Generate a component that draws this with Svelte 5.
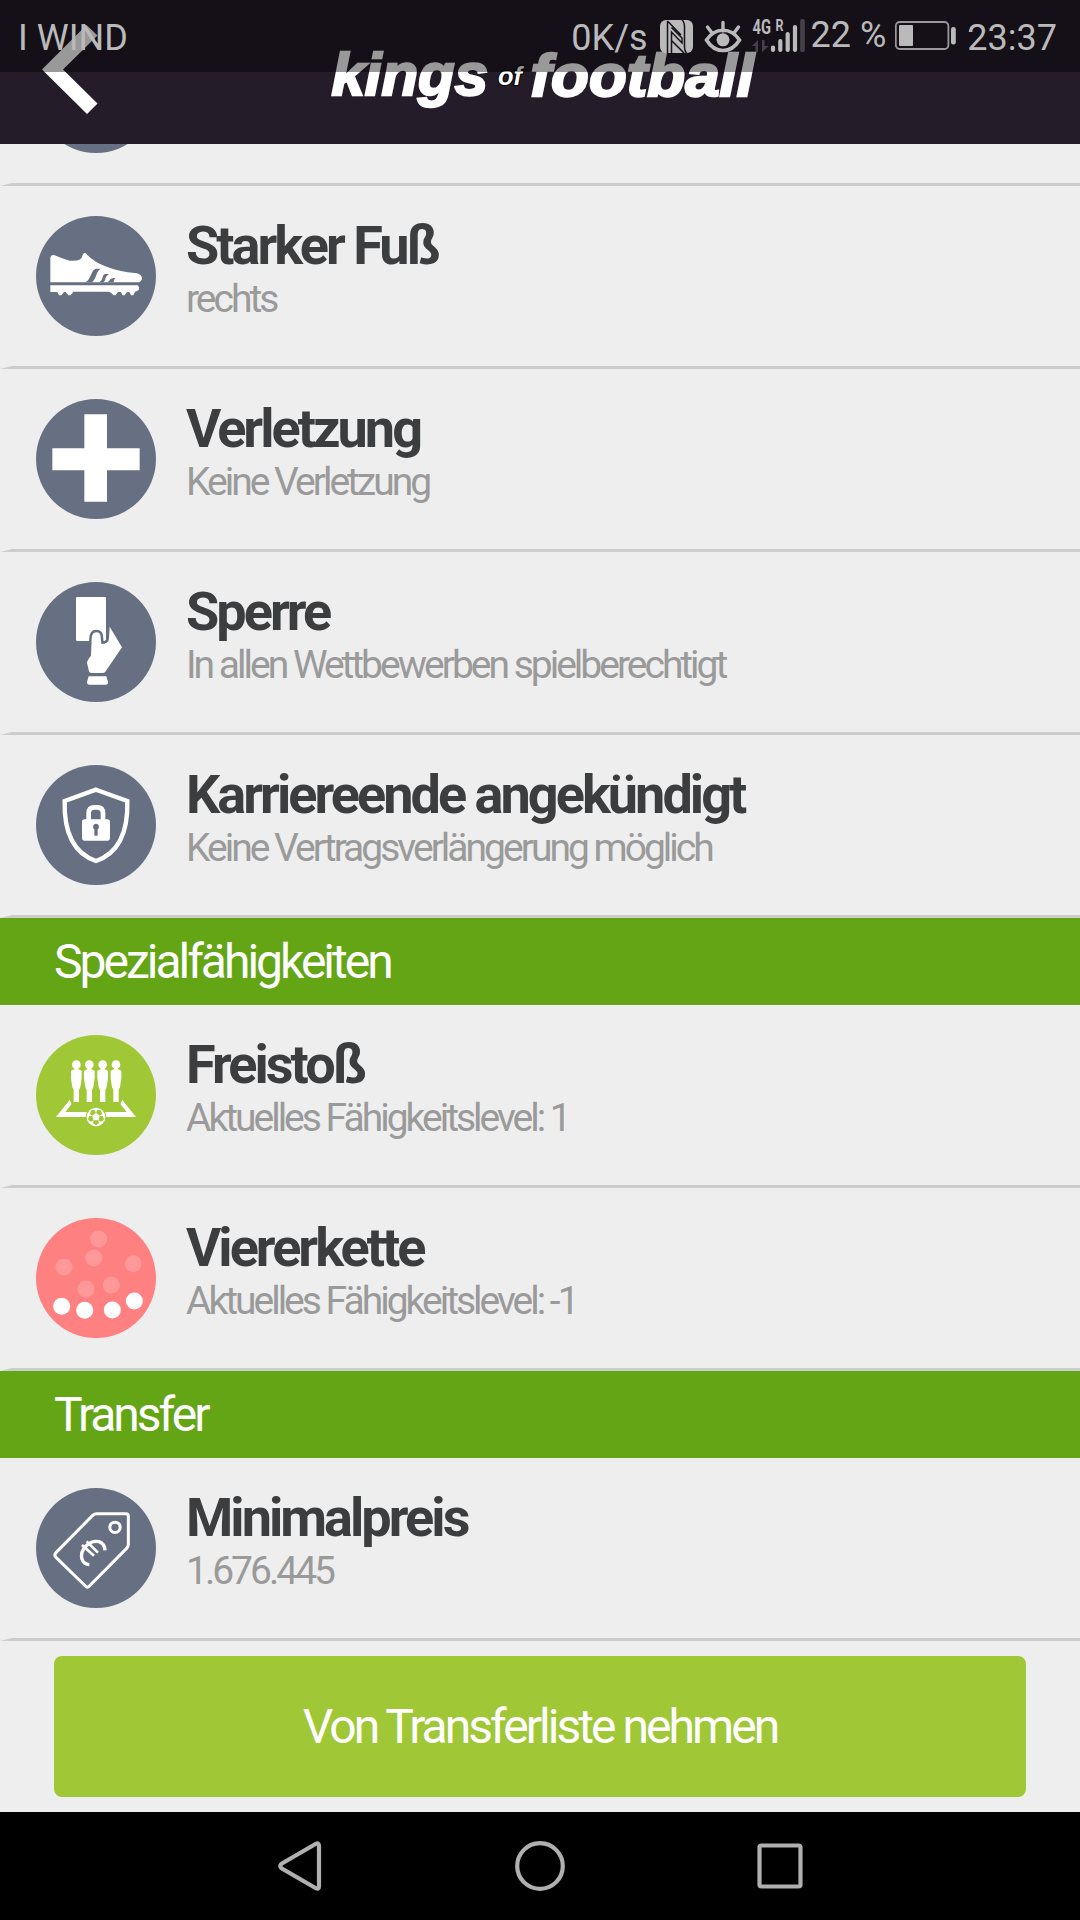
<script lang="ts">
  type Row = { icon: string; tone: string; title: string; text: string };
  type Section = { heading: string | null; rows: Row[] };

  const sections: Section[] = [
    {
      heading: null,
      rows: [
        { icon: 'shoe', tone: 'slate', title: 'Starker Fuß', text: 'rechts' },
        { icon: 'injury', tone: 'slate', title: 'Verletzung', text: 'Keine Verletzung' },
        { icon: 'card', tone: 'slate', title: 'Sperre', text: 'In allen Wettbewerben spielberechtigt' },
        { icon: 'shield', tone: 'slate', title: 'Karriereende angekündigt', text: 'Keine Vertragsverlängerung möglich' }
      ]
    },
    {
      heading: 'Spezialfähigkeiten',
      rows: [
        { icon: 'freekick', tone: 'lime', title: 'Freistoß', text: 'Aktuelles Fähigkeitslevel: 1' },
        { icon: 'backfour', tone: 'red', title: 'Viererkette', text: 'Aktuelles Fähigkeitslevel: -1' }
      ]
    },
    {
      heading: 'Transfer',
      rows: [{ icon: 'tag', tone: 'slate', title: 'Minimalpreis', text: '1.676.445' }]
    }
  ];

  const wall = [121, 160, 200, 240];
  const patches = [0, 72, 144, 216, 288];
  const others = [[188, 63], [173, 120], [84, 147], [292, 137], [150, 213], [226, 202]];
  const defenders = [[77, 265], [146, 277], [229, 276], [295, 249]];
</script>

<div class="screen">
  <header>
    <button class="back" aria-label="Zurück">
      <svg width="60" height="92" viewBox="40 24 60 92">
        <path d="M42 69.5 86.500 25 97.500 35.500 63 69.500 97.500 103.500 87 114z" fill="#fff" />
      </svg>
    </button>
    <svg class="logo" width="460" height="90" viewBox="310 30 460 90">
      <text class="word" x="331.500" y="94.500" textLength="156.500" lengthAdjust="spacingAndGlyphs">kings</text>
      <text class="of" x="498" y="85" textLength="24" lengthAdjust="spacingAndGlyphs">of</text>
      <text class="word" x="530.500" y="96" textLength="223.500" lengthAdjust="spacingAndGlyphs">football</text>
    </svg>
  </header>

  <div class="statusbar">
    <span class="carrier">I WIND</span>
    <span class="speed">0K/s</span>
    <svg class="tray" width="146" height="36" viewBox="660 18 146 36">
      <!-- nfc -->
      <rect x="660" y="20" width="33" height="33" rx="6" fill="#bababb" />
      <path d="M667.500 21 681 35M667.500 21V53M671.500 53V32L682 43V38L671.500 27.500M672 41 684 53M682 20Q684.500 22 684.500 27V47Q684.500 51 686.500 53" fill="none" stroke="#17111b" stroke-width="1.500" />
      <!-- eye -->
      <path d="M706.500 40C715 27 731 27 739.500 40C731 54 715 54 706.500 40z" fill="none" stroke="#bababb" stroke-width="3.600" />
      <circle cx="723" cy="39.800" r="6.500" fill="#bababb" />
      <path d="M723 22.500V31M707.500 27 712 33M738.500 27 734 33" stroke="#bababb" stroke-width="3.400" stroke-linecap="round" />
      <!-- signal -->
      <text class="net" x="752.500" y="33.500" textLength="18.500" lengthAdjust="spacingAndGlyphs">4G</text>
      <text class="roam" x="775.500" y="31" textLength="8" lengthAdjust="spacingAndGlyphs">R</text>
      <path d="M752 46 758 40V52H755.500V46zM762 40V52L769 46H764.500V40z" fill="#454049" />
      <path d="M773 47.500V50M780.300 41V50M787.700 34V50M795 27V50" stroke="#bababb" stroke-width="4.200" stroke-linecap="round" />
      <path d="M802.500 21V50" stroke="#454049" stroke-width="4.600" stroke-linecap="round" />
    </svg>
    <span class="percent">22 %</span>
    <svg class="battery" width="62" height="30" viewBox="896 21 62 30">
      <rect x="896.800" y="22" width="52.600" height="27" rx="4" fill="none" stroke="#9b989c" stroke-width="1.800" />
      <rect x="900" y="25" width="14" height="21" rx="1" fill="#bababb" />
      <rect x="952" y="27" width="4.800" height="17.500" rx="2.200" fill="#bababb" />
    </svg>
    <span class="clock">23:37</span>
  </div>

  <main>
    <div class="row peek">
      <span class="badge slate"></span>
    </div>
    {#each sections as section}
      {#if section.heading}
        <h2>{section.heading}</h2>
      {/if}
      {#each section.rows as row}
        <div class="row">
          <span class="badge {row.tone}">
            <svg viewBox="0 0 360 360" fill="#fff">
              {#if row.icon === 'shoe'}
                <path d="M43 199V124Q45 116 54 117Q78 128 101 134Q137 137 139 120Q141 108 149 112Q175 140 212 152Q246 166 302 172Q318 176 318 188Q315 199 304 199z" />
                <g class="cut">
                  <path d="M148 199Q158 194 165 176Q172 158 180 158H194Q185 163 181 177Q176 193 168 199z" />
                  <path d="M190 199Q199 193 200 184Q202 174 208 174H218Q209 182 208 189Q207 196 202 199z" />
                  <path d="M214 199Q221 196 223 190Q228 185 238 185Q233 191 233 199z" />
                </g>
                <path d="M43 208H306Q311 215 308 222Q303 226 297 227L292 238H285L280 228H273L266 238H259L255 228H246L238 238H232L226 231L219 227H112L104 238H97L89 228H84L76 238H69L64 228H43z" />
              {:else if row.icon === 'injury'}
                <path d="M145 46H213V148H311V214H213V308H145V214H49V148H145z" />
              {:else if row.icon === 'card'}
                <rect x="120" y="45" width="90" height="132" rx="4" />
                <path class="hand" d="M167 172Q167 151 181 151Q194 151 194 166L196 186Q219 186 219 168L221 134L258 196L208 269Q205 273 200 273H166Q160 273 159 268L153 242Q154 234 165 221z" />
                <path d="M158 283H211L216 300Q217 308 209 308H160Q153 308 153 300z" />
              {:else if row.icon === 'shield'}
                <path d="M180 74L274 108Q278 254 180 288Q82 254 86 108z" fill="none" stroke="#fff" stroke-width="13" />
                <path d="M158 168V145Q158 127 175 127H184Q201 127 201 145V168" fill="none" stroke="#fff" stroke-width="14" />
                <rect x="138" y="163" width="84" height="64" rx="8" />
                <path class="cut" d="M175 193A9 9 0 1 1 185 193V212H175z" />
              {:else if row.icon === 'freekick'}
                {#each wall as x}
                  <g transform="translate({x} 0)">
                    <circle cy="89" r="13" />
                    <path d="M-6 98H6V103L16 107V130L12 157L8 164V201H-8V164L-12 157L-16 130V107L-6 103z" />
                  </g>
                {/each}
                <path d="M60 246 101 195 107 207 88 231H152V246zM300 246 259 195 253 207 272 231H208V246z" />
                <circle class="turf" cx="180" cy="246" r="31" />
                <circle cx="180" cy="246" r="28" />
                <g class="turf" transform="translate(180 246)">
                  {#each patches as angle}
                    <path d="M-7 10L7 10L9 19L0 25L-9 19z" transform="rotate({angle})" />
                  {/each}
                </g>
              {:else if row.icon === 'backfour'}
                {#each others as [x, y]}
                  <circle cx={x} cy={y} r="25.500" opacity="0.2" />
                {/each}
                {#each defenders as [x, y]}
                  <circle cx={x} cy={y} r="25.500" />
                {/each}
              {:else}
                <g fill="none" stroke="#fff" stroke-width="9">
                  <path d="M182 77H270Q277 77 277 84V169Q277 176 272 181L160 294Q154 301 148 294L60 208Q53 201 60 194L170 82Q175 77 182 77z" />
                  <circle cx="237" cy="118" r="15.500" />
                  <path d="M207 187Q206 167 189 161Q168 156 150 174Q132 192 138 214Q143 229 160 230" stroke-width="10" />
                  <path d="M152 160 186 194M138 171 174 203" stroke-width="8" />
                </g>
              {/if}
            </svg>
          </span>
          <div class="info">
            <h3>{row.title}</h3>
            <p>{row.text}</p>
          </div>
        </div>
      {/each}
    {/each}
    <button class="action">Von Transferliste nehmen</button>
  </main>

  <nav>
    <svg viewBox="-30 -30 60 60"><path d="M-18.500 -2.200 15.500 -22Q19 -24 19 -20V20.500Q19 24 15.500 22L-18.500 2.200Q-21 0 -18.500 -2.200z" /></svg>
    <svg viewBox="-30 -30 60 60"><circle r="22.800" /></svg>
    <svg viewBox="-30 -30 60 60"><rect x="-20.500" y="-20.500" width="41" height="41" rx="2" /></svg>
  </nav>
</div>

<style>
  :global(body) {
    background: #eee;
  }

  .screen {
    position: relative;
    display: flex;
    flex-direction: column;
    width: 1080px;
    height: 1920px;
    overflow: hidden;
    background: #eee;
    font-family: Roboto, "Liberation Sans", sans-serif;
  }

  header {
    display: grid;
    grid-template-columns: 310px 460px 310px;
    align-items: start;
    height: 144px;
    background: #241c29;
  }

  .back {
    display: block;
    width: 60px;
    height: 92px;
    margin: 24px 0 0 40px;
    padding: 0;
    border: 0;
    background: none;
  }

  .logo {
    margin-top: 30px;
  }

  .word {
    font: italic 700 60px "Liberation Sans", sans-serif;
    fill: #fff;
    stroke: #fff;
    stroke-width: 2.4px;
  }

  .of {
    font: italic 700 25px "Liberation Sans", sans-serif;
    fill: #fff;
    stroke: #000;
    stroke-width: 2px;
    paint-order: stroke;
  }

  /* translucent system bar on top of the app header */
  .statusbar {
    position: absolute;
    top: 0;
    left: 0;
    display: flex;
    align-items: center;
    box-sizing: border-box;
    width: 100%;
    height: 72px;
    padding: 0 23px 0 18px;
    background: rgba(0, 0, 0, 0.4);
    color: #bababb;
    font-size: 36px;
    line-height: 42px;
    white-space: nowrap;
  }

  .carrier {
    margin-right: auto;
    padding-top: 3px;
  }

  .speed,
  .clock {
    padding-top: 3px;
  }

  .tray {
    margin-left: 12px;
    overflow: visible;
  }

  .percent {
    margin: -3px 9px 0 5px;
  }

  .battery {
    margin-right: 10px;
  }

  .net,
  .roam {
    font: 700 20px Roboto, sans-serif;
    fill: #bababb;
  }

  .roam {
    font-size: 17px;
  }

  main {
    display: flex;
    flex-direction: column;
    flex: 1;
  }

  .row {
    display: flex;
    gap: 30px;
    box-sizing: border-box;
    height: 183px;
    padding: 30px 0 0 24px;
    border-left: 12px solid transparent;
    border-bottom: 3px solid #ccc;
  }

  .peek {
    height: 42px;
    padding-top: 0;
    overflow: hidden;
  }

  .peek .badge {
    margin-top: -111px;
  }

  .badge {
    flex: none;
    width: 120px;
    height: 120px;
    border-radius: 50%;
  }

  .badge svg {
    display: block;
  }

  .slate {
    background: #677082;
  }

  .lime {
    background: #a0c836;
  }

  .red {
    background: #ff8080;
  }

  .cut {
    fill: #677082;
  }

  .hand {
    stroke: #677082;
    stroke-width: 15px;
    paint-order: stroke;
  }

  .turf {
    fill: #a0c836;
  }

  h2,
  h3,
  p {
    margin: 0;
    letter-spacing: -3px;
    white-space: nowrap;
  }

  h2 {
    height: 87px;
    padding-left: 54px;
    background: #64a516;
    color: #fff;
    font-size: 48px;
    font-weight: 400;
    line-height: 87px;
  }

  h3 {
    color: #3c3d3f;
    font-size: 54px;
    font-weight: 700;
    letter-spacing: -2.96px;
    line-height: 59px;
  }

  p {
    color: #9a9a9a;
    font-size: 39px;
    line-height: 49px;
  }

  .action {
    height: 141px;
    margin: 15px 54px 0;
    padding: 0;
    border: 0;
    border-radius: 8px;
    background: #a0c836;
    color: #fff;
    font-family: inherit;
    font-size: 48px;
    letter-spacing: -2.96px;
  }

  nav {
    display: flex;
    align-items: center;
    justify-content: center;
    gap: 180px;
    height: 108px;
    background: #000;
  }

  nav svg {
    width: 60px;
    height: 60px;
    fill: none;
    stroke: #b0b0b0;
    stroke-width: 4.2px;
  }
</style>
